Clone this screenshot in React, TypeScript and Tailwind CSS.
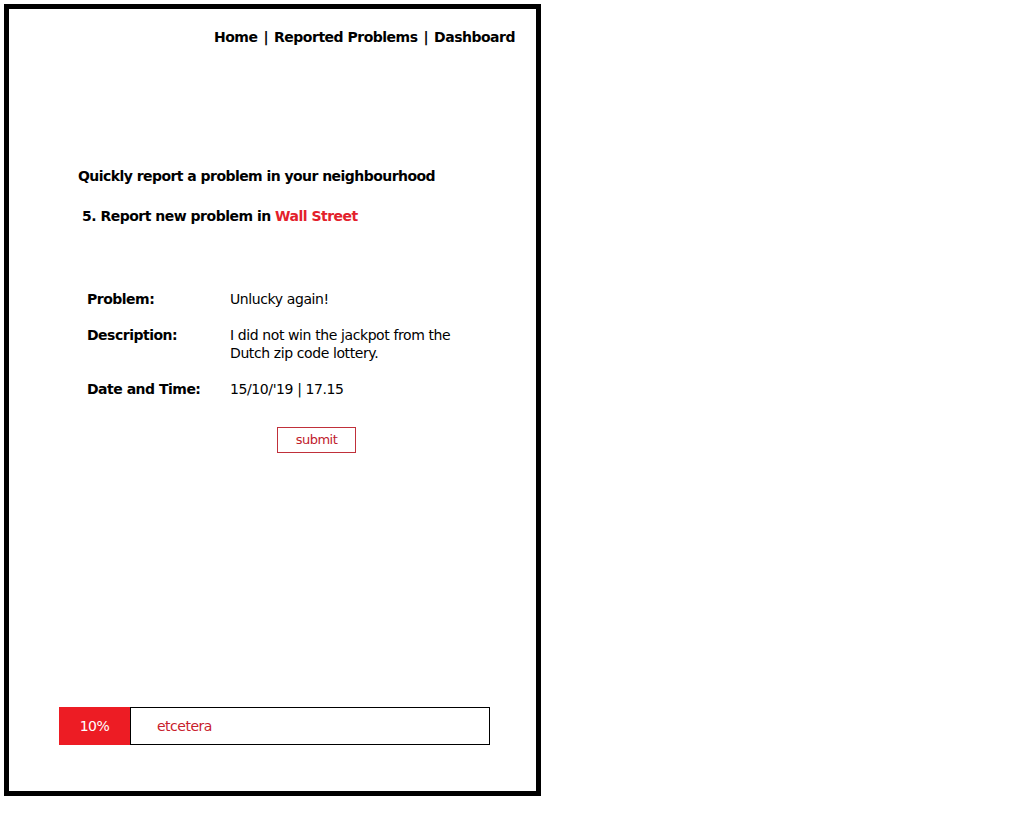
const FIELDS = [
  { label: 'Problem:', value: ['Unlucky again!'] },
  { label: 'Description:', value: ['I did not win the jackpot from the', 'Dutch zip code lottery.'] },
  { label: 'Date and Time:', value: ["15/10/'19 | 17.15"] },
];

const NAV = ['Home', 'Reported Problems', 'Dashboard'];

export default function App() {
  return (
    <div className="min-h-[820px] bg-white pl-1 pt-1 font-['DejaVu_Sans',sans-serif] text-black">
      <div className="flex h-[792px] w-[537px] flex-col border-[5px] border-black">
        {/* top nav */}
        <nav className="mt-[18px] flex justify-end gap-[6px] pr-[21px] text-[14px] font-bold tracking-[-0.5px]">
          {NAV.map((n, i) => (
            <span key={n} className="flex gap-[6px]">
              {i > 0 && <span>|</span>}
              {n}
            </span>
          ))}
        </nav>

        <h1 className="ml-[69px] mt-[118px] text-[14px] font-bold tracking-[-0.55px]">
          Quickly report a problem in your neighbourhood
        </h1>
        <h2 className="ml-[73px] mt-[19px] text-[14px] font-bold tracking-[-0.5px]">
          5. Report new problem in <span className="text-[#e3212b]">Wall Street</span>
        </h2>

        <dl className="ml-[78px] mt-[63px] flex flex-col gap-[18px] text-[14px]">
          {FIELDS.map((f) => (
            <div key={f.label} className="flex leading-[18px]">
              <dt className="w-[143px] shrink-0 font-bold tracking-[-0.5px]">{f.label}</dt>
              <dd className="tracking-[-0.4px]">
                {f.value.map((line) => (
                  <div key={line}>{line}</div>
                ))}
              </dd>
            </div>
          ))}
        </dl>

        <div className="mt-[29px] flex pl-[268px]">
          <button className="h-[26px] w-[79px] border border-[#c0303a] text-[13px] tracking-[-0.5px] text-[#c0202c]">
            submit
          </button>
        </div>

        <div className="mt-auto mb-[46px] ml-[50px] flex h-[38px] w-[431px]">
          <div className="flex w-[71px] items-center justify-center bg-[#ed1c24] text-[14px] text-white tracking-[-0.5px]">
            10%
          </div>
          <div className="flex flex-1 items-center border border-black pl-[26px] text-[14px] text-[#c8202c] tracking-[-0.5px]">
            etcetera
          </div>
        </div>
      </div>
    </div>
  );
}
